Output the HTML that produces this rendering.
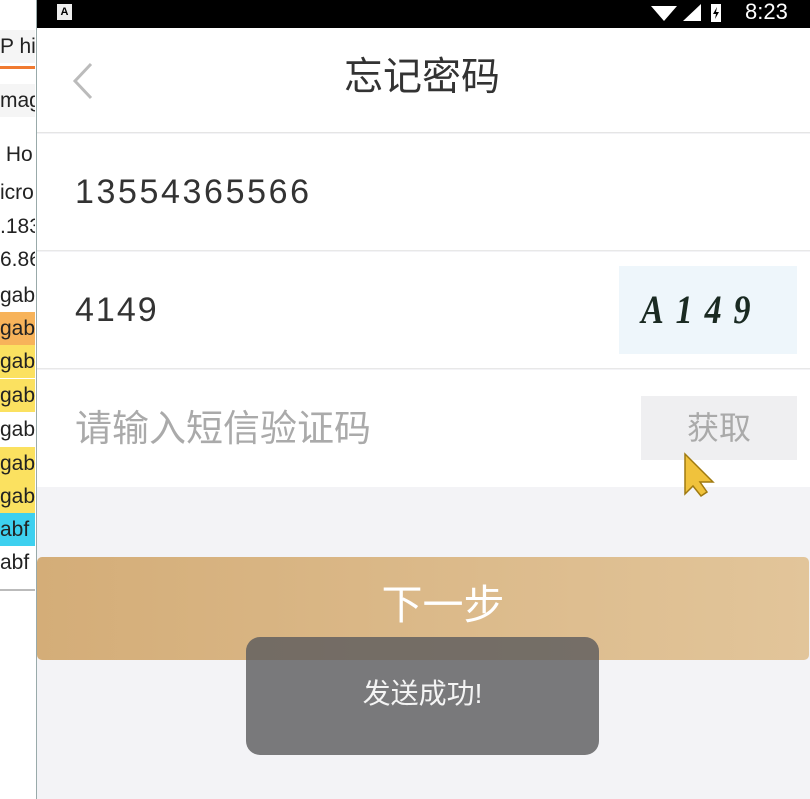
<!DOCTYPE html>
<html><head><meta charset="utf-8"><style>
*{margin:0;padding:0;box-sizing:border-box}
body{width:810px;height:799px;overflow:hidden;background:#fff;font-family:"Liberation Sans","Noto Sans CJK SC",sans-serif;position:relative}
.abs{position:absolute}
.lp div{position:absolute;left:0;width:35px;height:33px;font-size:21px;color:#222;line-height:33px;white-space:nowrap;overflow:hidden}
.app{position:absolute;left:36px;top:0;width:774px;height:799px;background:#f3f3f6;border-left:1px solid #9aa}
.row{position:absolute;left:0;width:774px;height:117px;background:#fff;border-bottom:1px solid #e8e8e8}
.row span{position:absolute;left:38px;top:0;line-height:117px;font-size:34px;color:#333}
</style></head><body>
<div class="lp">
<div style="top:30px;background:#f5f5f5">P hi</div>
<div class="abs" style="top:66px;left:0;width:35px;height:3px;background:#f07a30"></div>
<div style="top:84px;background:#f5f5f5">mag</div>
<div style="top:138px">&nbsp;Ho</div>
<div style="top:176px">icro</div>
<div style="top:210px">.183</div>
<div style="top:243px">6.86</div>
<div style="top:279px">gab</div>
<div style="top:312px;background:#f7b35a">gab</div>
<div style="top:345px;background:#fbe160">gab</div>
<div style="top:379px;background:#fbe160">gab</div>
<div style="top:413px">gab</div>
<div style="top:447px;background:#fbe160">gab</div>
<div style="top:480px;background:#fbe160">gab</div>
<div style="top:513px;background:#3dd0ef">abf</div>
<div style="top:546px">abf</div>
<div class="abs" style="top:589px;height:2px;background:#bbb"></div>
</div>
<div class="app">
<div class="abs" style="left:0;top:0;width:774px;height:28px;background:#000"></div>
<div class="abs" style="left:20px;top:4px;width:15px;height:16px;background:#eee;font-size:11px;line-height:16px;text-align:center;color:#000;font-weight:bold">A</div>
<svg class="abs" style="left:612px;top:3px" width="80" height="20"><path d="M2 3 L28 3 L15 18Z" fill="#fff"/><path d="M34 18 L52 18 L52 1Z" fill="#fff"/><rect x="62" y="1" width="10" height="18" fill="#fff"/><path d="M68 4 L64 11 L67 11 L66 16 L70 9 L67 9Z" fill="#000"/></svg>
<div class="abs" style="left:708px;top:-2px;color:#fff;font-size:22px;line-height:28px">8:23</div>
<div class="abs" style="left:0;top:28px;width:774px;height:105px;background:#fff;border-bottom:1px solid #e5e5e5"></div>
<svg class="abs" style="left:32px;top:60px" width="30" height="42"><path d="M22 4 L6 21 L22 38" stroke="#bbb" stroke-width="3" fill="none"/></svg>
<div class="abs" style="left:0;top:50px;width:770px;text-align:center;font-size:39px;color:#333;line-height:56px">忘记密码</div>
<div class="row" style="top:134px"><span style="letter-spacing:2.6px">13554365566</span></div>
<div class="row" style="top:252px"><span style="letter-spacing:2px">4149</span>
<div class="abs" style="left:582px;top:14px;width:178px;height:88px;background:#eef6fb"><div style="font-family:'Liberation Serif',serif;font-style:italic;font-weight:bold;font-size:40px;line-height:88px;color:#1a2a22;letter-spacing:14px;padding-left:26px;transform:scaleX(0.85);transform-origin:left">A149</div></div></div>
<div class="row" style="top:370px;border:none"><span style="color:#aaa;font-size:37px">请输入短信验证码</span>
<div class="abs" style="left:604px;top:26px;width:156px;height:64px;background:#efeff1;color:#aaa;font-size:32px;text-align:center;line-height:64px">获取</div></div>
<svg class="abs" style="left:646px;top:452px" width="34" height="46"><path d="M2 2 L2 42 L10 34 L18 44 L24 40 L17 30 L30 30Z" fill="#f0c23c" stroke="#a07a10" stroke-width="1.5"/></svg>
<div class="abs" style="left:0;top:557px;width:772px;height:103px;border-radius:5px;background:linear-gradient(90deg,#d4ad78,#e2c59a);color:#fff;font-size:41px;text-align:center;line-height:96px;padding-left:40px">下一步</div>
<div class="abs" style="left:209px;top:637px;width:353px;height:118px;border-radius:14px;background:rgba(90,90,92,0.8);color:#f4f4f4;font-size:28px;text-align:center;line-height:114px">发送成功!</div>
</div>
</body></html>
